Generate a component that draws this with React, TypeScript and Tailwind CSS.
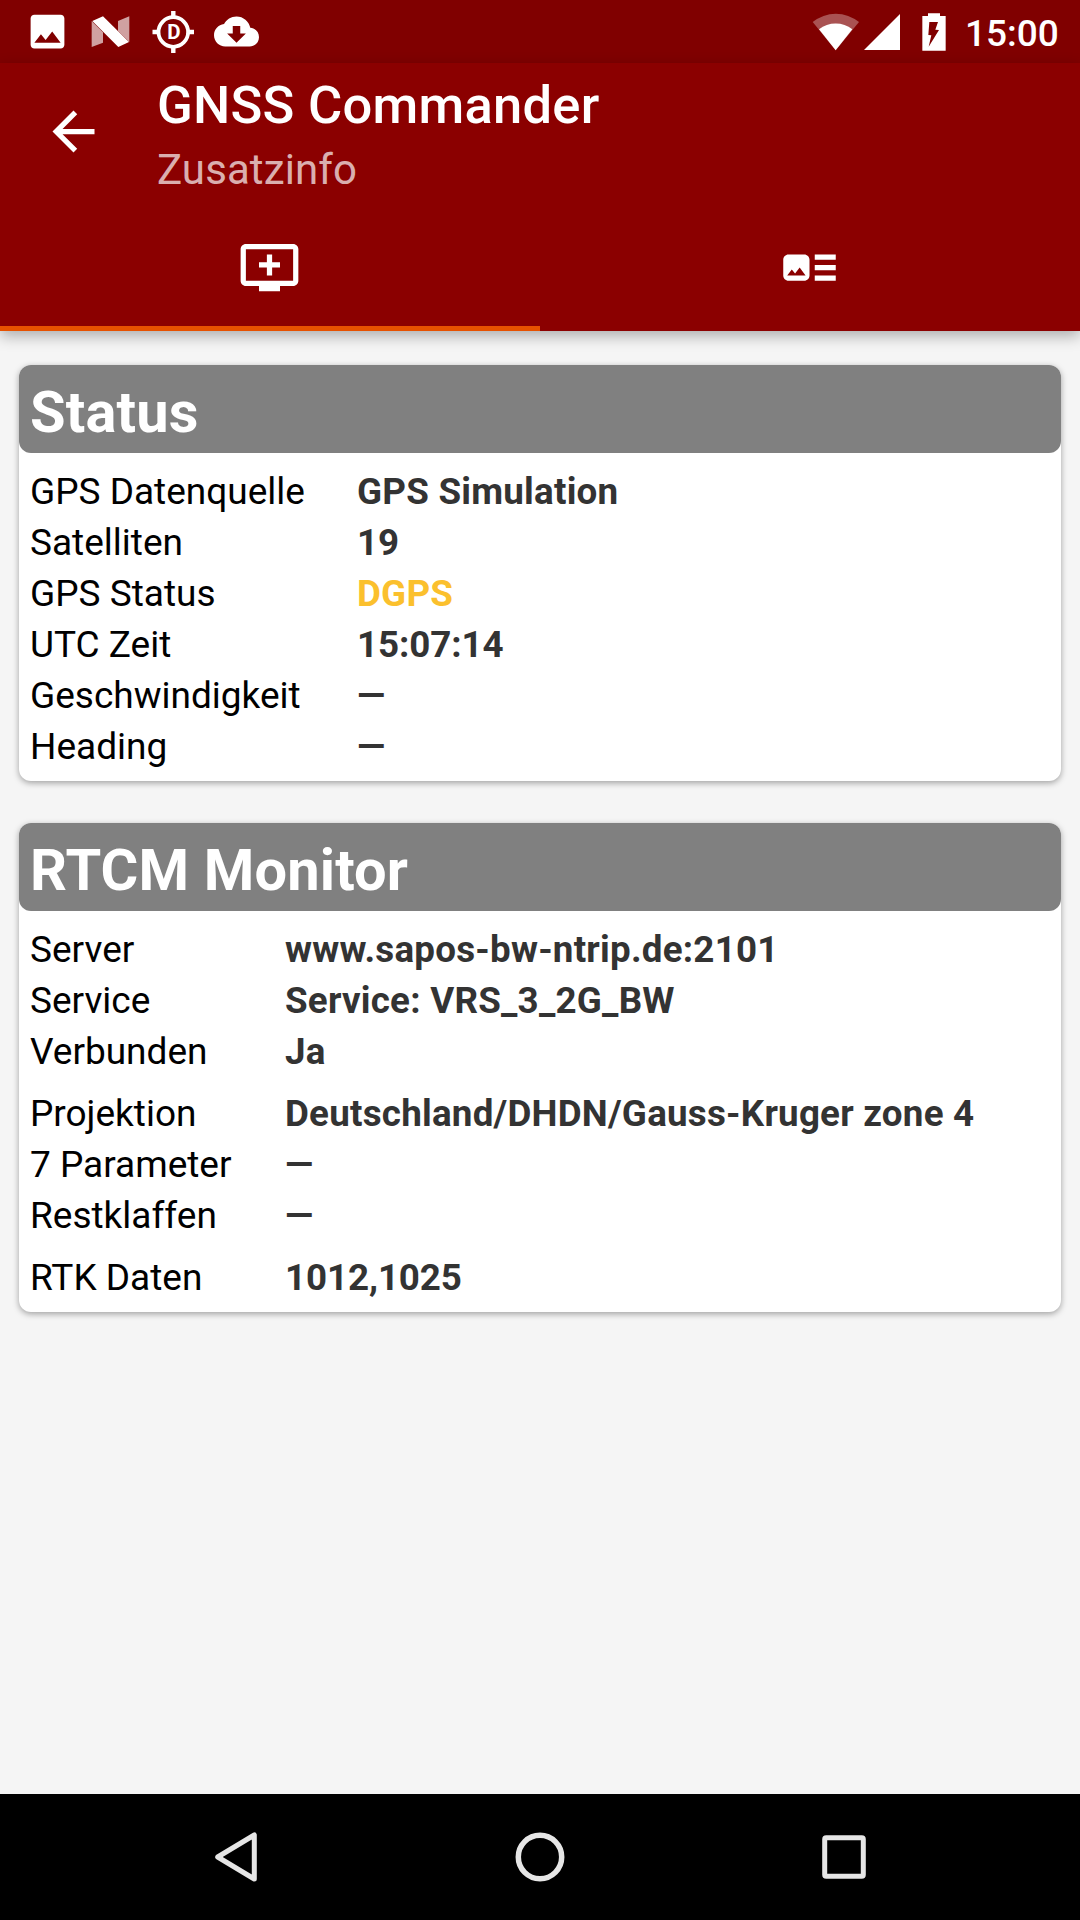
import type { ReactNode } from "react";

type RowData = { label: string; value: string; warn?: boolean };

const STATUS_ROWS: RowData[] = [
  { label: "GPS Datenquelle", value: "GPS Simulation" },
  { label: "Satelliten", value: "19" },
  { label: "GPS Status", value: "DGPS", warn: true },
  { label: "UTC Zeit", value: "15:07:14" },
  { label: "Geschwindigkeit", value: "—" },
  { label: "Heading", value: "—" },
];

const RTCM_GROUPS: RowData[][] = [
  [
    { label: "Server", value: "www.sapos-bw-ntrip.de:2101" },
    { label: "Service", value: "Service: VRS_3_2G_BW" },
    { label: "Verbunden", value: "Ja" },
  ],
  [
    { label: "Projektion", value: "Deutschland/DHDN/Gauss-Kruger zone 4" },
    { label: "7 Parameter", value: "—" },
    { label: "Restklaffen", value: "—" },
  ],
  [{ label: "RTK Daten", value: "1012,1025" }],
];

const MaterialIcon = ({ d, className }: { d: string; className: string }) => (
  <svg viewBox="0 0 24 24" fill="currentColor" className={className}>
    <path d={d} />
  </svg>
);

const StatusBar = () => (
  <div className="flex h-[63px] shrink-0 items-center justify-between bg-[#800000] text-white">
    <div className="flex items-center pl-[25px]">
      <MaterialIcon
        className="size-[45px]"
        d="M21 19V5c0-1.1-.9-2-2-2H5c-1.1 0-2 .9-2 2v14c0 1.1.9 2 2 2h14c1.1 0 2-.9 2-2zM8.5 13.5l2.5 3.01L14.5 12l4.5 6H5l3.5-4.5z"
      />
      <svg
        viewBox="0 0 120 100"
        fill="currentColor"
        className="ml-[21px] w-10"
      >
        <path d="M2 18l34 34v31L2 96z" opacity="0.63" />
        <path d="M81 18l34-14v77L81 48z" opacity="0.63" />
        <path d="M4 18L36 4l78 77-32 15z" />
      </svg>
      <svg viewBox="0 0 42 42" className="ml-[21px] size-[42px]">
        <circle
          cx="21.3"
          cy="21"
          r="14.8"
          fill="none"
          stroke="currentColor"
          strokeWidth="3.8"
        />
        <path
          d="M21.3 0v6M21.3 36v6M.5 21h6M36 21h6"
          stroke="currentColor"
          strokeWidth="4.4"
        />
        <text
          x="21.8"
          y="28.1"
          textAnchor="middle"
          fontSize="20.5"
          fontWeight="700"
          fill="currentColor"
        >
          D
        </text>
      </svg>
      <MaterialIcon
        className="ml-5 size-[45px]"
        d="M19.35 10.04C18.67 6.59 15.64 4 12 4 9.11 4 6.6 5.64 5.35 8.04 2.34 8.36 0 10.91 0 14c0 3.31 2.69 6 6 6h13c2.76 0 5-2.24 5-5 0-2.64-2.05-4.78-4.65-4.96zM17 13l-5 5-5-5h3V9h4v4h3z"
      />
    </div>
    <div className="flex w-[268px] items-center">
      <svg viewBox="0 0 144 114" fill="currentColor" className="w-12">
        <path d="M71 112L2 27A110 110 0 0 1 141 27z" opacity="0.32" />
        <path d="M71 112L21 49A81 81 0 0 1 121 49z" />
      </svg>
      <svg viewBox="0 0 36 36" fill="currentColor" className="ml-1 size-9">
        <path d="M36 0v36H0z" />
      </svg>
      <svg
        viewBox="0 0 72 114"
        fill="currentColor"
        fillRule="evenodd"
        className="ml-[22px] w-6"
      >
        <path d="M18 1h36v8h17v104H1V9h17zM22 27l-3 39 9 1-8 34 31-50-11-1 8-23z" />
      </svg>
      <span className="ml-[19px] pt-[3px] text-[37px] leading-none font-medium">
        15:00
      </span>
    </div>
  </div>
);

const Header = () => (
  <header className="z-10 flex h-[268px] shrink-0 flex-col bg-[#8b0000] text-white shadow-[0_5px_14px_rgba(0,0,0,0.3)]">
    <div className="flex h-[137px] shrink-0">
      <MaterialIcon
        className="mt-[37px] ml-[42px] size-[63px]"
        d="M20 11H7.83l5.59-5.59L12 4l-8 8 8 8 1.41-1.41L7.83 13H20v-2z"
      />
      <div className="ml-[52px]">
        <h1 className="mt-2.5 text-[52.5px] leading-[64px] font-medium tracking-[0.25px]">
          GNSS Commander
        </h1>
        <p className="mt-[5px] text-[42px] leading-[56px] tracking-[0.1px] text-white/70">
          Zusatzinfo
        </p>
      </div>
    </div>
    <div className="flex grow">
      <div className="flex w-1/2 justify-center border-b-[5px] border-[#e65100] pt-9 pr-0.5">
        <MaterialIcon
          className="size-[63px]"
          d="M21 3H3c-1.11 0-2 .89-2 2v12c0 1.1.89 2 2 2h5v2h8v-2h5c1.1 0 1.99-.9 1.99-2L23 5c0-1.11-.9-2-2-2zm0 14H3V5h18v12zm-5-7v2h-3v3h-2v-3H8v-2h3V7h2v3h3z"
        />
      </div>
      <div className="flex w-1/2 justify-center pt-9 pr-0.5">
        <MaterialIcon
          className="size-[63px]"
          d="M22 13h-8v-2h8v2zm0-6h-8v2h8V7zm-8 10h8v-2h-8v2zm-2-8v6c0 1.1-.9 2-2 2H4c-1.1 0-2-.9-2-2V9c0-1.1.9-2 2-2h6c1.1 0 2 .9 2 2zm-1.5 6l-2.25-3-1.75 2.26-1.25-1.51L3.5 15h7z"
        />
      </div>
    </div>
  </header>
);

const Row = ({ row, labelClass }: { row: RowData; labelClass: string }) => {
  const numeric = /^[\d:,]+$/.test(row.value);

  return (
    <div className="flex h-[51px] items-center leading-[51px]">
      <span className={`shrink-0 text-[37px] text-black ${labelClass}`}>
        {row.label}
      </span>
      <span
        className={`text-[36.75px] font-bold whitespace-nowrap ${
          row.warn ? "text-[#fbc02d]" : "text-[#333333]"
        } ${numeric ? "tracking-[-0.1px]" : "tracking-[0.23px]"}`}
      >
        {row.value}
      </span>
    </div>
  );
};

const Card = ({ title, children }: { title: string; children: ReactNode }) => (
  <section className="rounded-xl bg-white shadow-[0_2px_6px_rgba(0,0,0,0.35)]">
    <h2 className="flex h-[88px] items-center rounded-xl bg-[#808080] px-[11px] pt-1.5 text-[57.75px] font-bold tracking-[0.15px] text-white">
      {title}
    </h2>
    {children}
  </section>
);

const NavBar = () => (
  <nav className="flex h-[126px] shrink-0 items-center justify-center bg-black text-[#e6e6e6]">
    <div className="flex w-[304px] justify-center">
      <svg
        viewBox="0 0 64 64"
        fill="none"
        stroke="currentColor"
        strokeWidth="5"
        strokeLinejoin="round"
        className="size-16"
      >
        <path d="M13.7 32L50.3 10v44z" />
      </svg>
    </div>
    <div className="flex w-[304px] justify-center">
      <svg
        viewBox="0 0 64 64"
        fill="none"
        stroke="currentColor"
        strokeWidth="5.5"
        className="size-16"
      >
        <circle cx="32" cy="32" r="21.7" />
      </svg>
    </div>
    <div className="flex w-[304px] justify-center">
      <svg
        viewBox="0 0 64 64"
        fill="none"
        stroke="currentColor"
        strokeWidth="5"
        className="size-16"
      >
        <rect x="12.7" y="12.7" width="38.6" height="38.6" rx="1.5" />
      </svg>
    </div>
  </nav>
);

const App = () => (
  <div className="flex h-[1920px] w-[1080px] flex-col overflow-hidden bg-[#f5f5f5] font-['Roboto',sans-serif]">
    <StatusBar />
    <Header />
    <main className="flex grow flex-col gap-[42px] px-[19px] pt-[34px]">
      <Card title="Status">
        <div className="px-[11px] pt-[13px] pb-[9px]">
          {STATUS_ROWS.map((row) => (
            <Row key={row.label} row={row} labelClass="w-[327px]" />
          ))}
        </div>
      </Card>
      <Card title="RTCM Monitor">
        <div className="flex flex-col gap-[11px] px-[11px] pt-[13px] pb-[9px]">
          {RTCM_GROUPS.map((rows) => (
            <div key={rows[0].label}>
              {rows.map((row) => (
                <Row key={row.label} row={row} labelClass="w-[255px]" />
              ))}
            </div>
          ))}
        </div>
      </Card>
    </main>
    <NavBar />
  </div>
);

export default App;
